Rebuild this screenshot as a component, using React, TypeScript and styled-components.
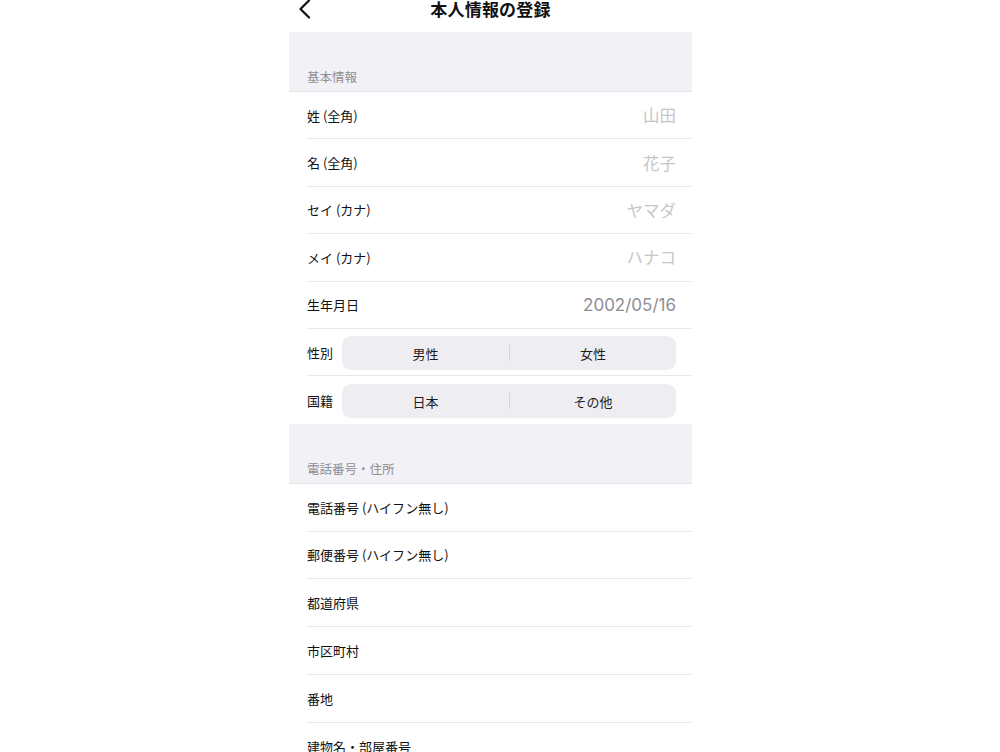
import styled, { createGlobalStyle } from "styled-components";

const GlobalStyle = createGlobalStyle`
  body {
    margin: 0;
    background: #ffffff;
    font-family: "Noto Sans CJK JP", "Noto Sans", sans-serif;
  }
`;

interface IField {
  label: string;
  value?: string;
  dark?: boolean;
}

const basicFields: IField[] = [
  { label: "姓 (全角)", value: "山田" },
  { label: "名 (全角)", value: "花子" },
  { label: "セイ (カナ)", value: "ヤマダ" },
  { label: "メイ (カナ)", value: "ハナコ" },
  { label: "生年月日", value: "2002/05/16", dark: true },
];

const segments = [
  { label: "性別", options: ["男性", "女性"] },
  { label: "国籍", options: ["日本", "その他"] },
];

const addressFields: IField[] = [
  { label: "電話番号 (ハイフン無し)" },
  { label: "郵便番号 (ハイフン無し)" },
  { label: "都道府県" },
  { label: "市区町村" },
  { label: "番地" },
  { label: "建物名・部屋番号" },
];

export default function App() {
  return (
    <>
      <GlobalStyle />
      <Screen>
        <Header>
          <BackButton>
            <svg width="14" height="20" viewBox="0 0 14 20">
              <path
                d="M11 1.5 L2.5 10 L11 18.5"
                fill="none"
                stroke="#111"
                strokeWidth="2.2"
                strokeLinecap="round"
                strokeLinejoin="round"
              />
            </svg>
          </BackButton>
          <Title>本人情報の登録</Title>
        </Header>

        <SectionHeader>基本情報</SectionHeader>
        <List>
          {basicFields.map((f) => (
            <Row key={f.label} height={47.4}>
              <Label>{f.label}</Label>
              <Value dark={f.dark}>{f.value}</Value>
            </Row>
          ))}
          {segments.map((s, i) => (
            <Row key={s.label} height={47.4} last={i === segments.length - 1}>
              <Label>{s.label}</Label>
              <Segment>
                {s.options.map((o) => (
                  <SegmentOption key={o}>{o}</SegmentOption>
                ))}
              </Segment>
            </Row>
          ))}
        </List>

        <SectionHeader>電話番号・住所</SectionHeader>
        <List>
          {addressFields.map((f) => (
            <Row key={f.label} height={47.8}>
              <Label>{f.label}</Label>
            </Row>
          ))}
        </List>
      </Screen>
    </>
  );
}

// Style
const Screen = styled.div`
  width: 403px;
  margin-left: 289px;
  height: 752px;
  overflow: hidden;
  background: #ffffff;
`;

const Header = styled.div`
  position: relative;
  height: 32px;
  display: flex;
  justify-content: center;
  align-items: flex-start;
`;

const BackButton = styled.div`
  position: absolute;
  left: 9px;
  top: -1px;
  display: flex;
`;

const Title = styled.div`
  font-size: 17px;
  line-height: 18px;
  font-weight: 700;
  color: #111111;
  letter-spacing: 0.2px;
`;

const SectionHeader = styled.div`
  height: 60px;
  box-sizing: border-box;
  background: #f2f1f6;
  border-bottom: 1px solid #e6e5ea;
  display: flex;
  align-items: flex-end;
  padding: 0 18px 5px;
  font-size: 12.5px;
  color: #8e8e93;
`;

const List = styled.div`
  background: #ffffff;
`;

const Row = styled.div<{ height: number; last?: boolean }>`
  height: ${(p) => p.height}px;
  box-sizing: border-box;
  margin-left: 18px;
  padding-right: 16px;
  display: flex;
  align-items: center;
  gap: 9px;
  border-bottom: ${(p) => (p.last ? "none" : "1px solid #e8e8ec")};
`;

const Label = styled.div`
  font-size: 13px;
  font-weight: 400;
  color: #111113;
  white-space: pre;
`;

const Value = styled.div<{ dark?: boolean }>`
  margin-left: auto;
  font-family: ${(p) =>
    p.dark ? '"Inter", "Noto Sans", sans-serif' : '"Noto Sans CJK JP", sans-serif'};
  font-size: ${(p) => (p.dark ? "17px" : "16.5px")};
  color: ${(p) => (p.dark ? "#8e8e93" : "#c6c6ca")};
`;

const Segment = styled.div`
  flex: 1;
  height: 34px;
  margin-top: 2px;
  border-radius: 9px;
  background: #eeedf2;
  display: grid;
  grid-template-columns: 1fr 1fr;
  align-items: center;
  & > div + div {
    border-left: 1px solid #d4d3d8;
  }
`;

const SegmentOption = styled.div`
  height: 16px;
  display: flex;
  align-items: center;
  justify-content: center;
  font-size: 13px;
  color: #1c1c1e;
`;
